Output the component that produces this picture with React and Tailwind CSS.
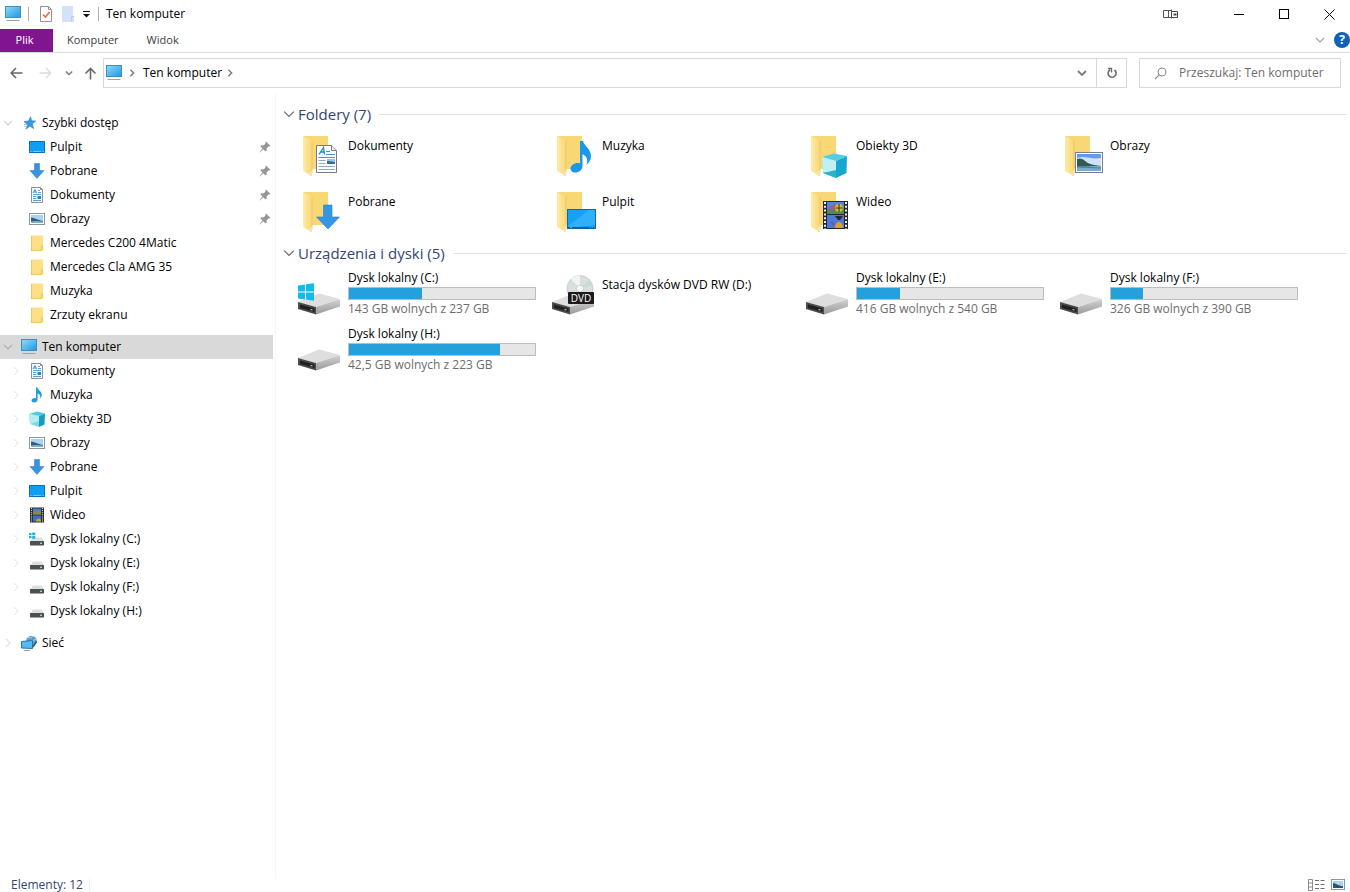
import { useState } from "react";
import clsx from "clsx";

function ComputerIcon() {
  return (
    <svg width="16" height="16" viewBox="0 0 16 16" className="shrink-0">
      <defs>
        <linearGradient id="screen" x1="0" y1="0" x2="1" y2="1">
          <stop offset="0" stopColor="#8fdcfb" />
          <stop offset="1" stopColor="#1f97e0" />
        </linearGradient>
      </defs>
      <rect x="0.5" y="0.5" width="15" height="11" fill="url(#screen)" stroke="#3f8fc0" />
      <path d="M1.500 14.500h13" stroke="#98a5ae" />
    </svg>
  );
}

function StarIcon() {
  return (
    <svg width="16" height="16" viewBox="0 0 16 16" className="shrink-0">
      <path
        d="M9.600 1.800l1 4 4.200.2-3.400 2.800 1.200 4.800-3.700-2.500L5.400 14l1.100-4.500L3 6.500l4.500-.5z"
        fill="#3a9ae0"
        stroke="#2a7fc0"
        strokeWidth="0.6"
      />
      <path d="M3 9.500h3M3.500 11.500h2M4 13.500h2" stroke="#7bb9e6" strokeWidth="0.8" />
    </svg>
  );
}

function DesktopIcon() {
  return (
    <svg width="16" height="16" viewBox="0 0 16 16" className="shrink-0">
      <rect x="0.5" y="2.5" width="15" height="11" fill="#109ef5" stroke="#0d6fb8" />
      <path d="M1 12.500h1.500M4 12.500h8M13.500 12.500h1.500" stroke="#8fd3ff" strokeWidth="0.8" />
    </svg>
  );
}

function DownloadIcon() {
  return (
    <svg width="16" height="16" viewBox="0 0 16 16" className="shrink-0">
      <path d="M5.500.5h5v7h4.500L8 15.500 1 7.500h4.500z" fill="#3a93e0" stroke="#2b77bd" strokeWidth="0.5" />
    </svg>
  );
}

function DocumentIcon() {
  return (
    <svg width="16" height="16" viewBox="0 0 16 16" className="shrink-0">
      <path d="M2.500.5h9l2 2v13h-11z" fill="#fff" stroke="#8b9096" />
      <path d="M11.500.5v2h2" fill="none" stroke="#8b9096" />
      <path d="M4 6l2-3.500L7.500 6M5 5h2" fill="none" stroke="#2b8fd6" />
      <path d="M9 3.500h2M9 5.500h3M4 7.500h8M4 9.500h3.500M4 11.500h3.500M4 13.500h8" stroke="#4ba3dc" />
      <rect x="8.500" y="9" width="3.500" height="3" fill="#2f7fb5" />
    </svg>
  );
}

function PictureIcon() {
  return (
    <svg width="16" height="16" viewBox="0 0 16 16" className="shrink-0">
      <rect x="0.5" y="2.5" width="15" height="11" fill="#fff" stroke="#8d949b" />
      <rect x="2" y="4" width="12" height="8" fill="#a9d3f2" />
      <path d="M2 6.500c3 .2 5 2 12 3.500v2H2z" fill="#335b73" />
      <path d="M2 10.500c4-.8 8-.6 12 0V12H2z" fill="#7fb3d6" />
    </svg>
  );
}

function FolderIcon() {
  return (
    <svg width="16" height="16" viewBox="0 0 16 16" className="shrink-0">
      <path d="M2 .5h12V15.500H2z" fill="#fddf85" />
      <path d="M2.500 1v14.500M2 15.500h10" stroke="#ecc75f" />
      <path d="M12 11l2-1v5.500h-2z" fill="#f0c95f" />
    </svg>
  );
}

function NoteIcon() {
  return (
    <svg width="16" height="16" viewBox="0 0 16 16" className="shrink-0">
      <path
        d="M7 .5h1.500c.3 2.700 4.500 4 4.300 7.300 0 1.700-.8 2.900-1.800 3.700.8-2.300.3-4-2.400-5.200v6.200C8.500 14.400 7 15.500 5.100 15.500 3.500 15.500 2.500 14.700 2.500 13.500c0-1.400 1.500-2.500 3.200-2.500.5 0 .9.1 1.300.2z"
        fill="#1b9be8"
      />
    </svg>
  );
}

function CubeIcon() {
  return (
    <svg width="16" height="16" viewBox="0 0 16 16" className="shrink-0">
      <path d="M0 3l8-2.500L16 2.500 10 5z" fill="#4fcbe0" />
      <path d="M0 3l10 2v11L1 13z" fill="#7fd9e4" />
      <path d="M0 3l10 2v5L1 13z" fill="#b4edf2" />
      <path d="M10 5l6-2.500-.5 11L10 16z" fill="#149dc4" />
    </svg>
  );
}

function FilmIcon() {
  return (
    <svg width="16" height="16" viewBox="0 0 16 16" className="shrink-0">
      <rect x="1" y="0.5" width="14" height="15" fill="#2b2b2e" />
      <path d="M2.500 1v14M13.500 1v14" stroke="#d8d8d8" strokeWidth="1.2" strokeDasharray="1 1.100" />
      <rect x="4" y="1.5" width="8" height="6" fill="#4b7fc9" />
      <rect x="4" y="8.5" width="8" height="6" fill="#3b6fc2" />
      <path d="M4 5c3 0 4-2 8-1v3.500H4z" fill="#8b8a4a" />
      <path d="M7 14.500c0-2 1.500-3 3-3s2 1.500 2 3z" fill="#c8a23c" />
    </svg>
  );
}

function DriveIcon({ system }) {
  return (
    <svg width="16" height="16" viewBox="0 0 16 16" className="shrink-0">
      <path d="M4 6.500h8.500L15 10.500H1z" fill="#dcdedf" />
      <rect x="1" y="10" width="14" height="4.5" rx="0.5" fill="#4d5052" />
      <rect x="11" y="11.5" width="2" height="1.5" fill="#79e58d" />
      {system && (
        <path d="M0 2h2.500v2.300H0zM3.200 1.600h3v2.700h-3zM0 5h2.500v2.300H0zM3.200 5h3v2.700h-3z" fill="#19b5dc" />
      )}
    </svg>
  );
}

function NetworkIcon() {
  return (
    <svg width="16" height="16" viewBox="0 0 16 16" className="shrink-0">
      <circle cx="10.5" cy="6" r="5.3" fill="#5b9fc4" />
      <path d="M7 2.500c2 1 4 0 5-1.500M11 6l4-2" stroke="#a6d7ee" fill="none" />
      <path d="M0.500 6.500l11-1v8l-11-.5z" fill="#58b9f2" stroke="#2277ae" />
      <path d="M12 12l3.500-5.500" stroke="#34566b" strokeWidth="1.4" />
      <path d="M3 15.500h6" stroke="#8fa6b3" />
    </svg>
  );
}

function PinIcon() {
  return (
    <svg width="12" height="12" viewBox="0 0 12 12" className="shrink-0">
      <path
        d="M7 .5L11.500 5l-1.300.6-.7-.2-2 2 .1 2.200-1 .9L4.300 8.200.8 11.500.4 11.200 3.500 7.400 1.300 5.200l1-1 2.300.2 2-2-.2-.8z"
        fill="#93969a"
      />
    </svg>
  );
}

function Chevron({ className, direction = "down", size = 10, width = 1.2 }) {
  const d = direction === "down" ? "M1 3l4 4 4-4" : "M3 1l4 4-4 4";
  return (
    <svg width={size} height={size} viewBox="0 0 10 10" className={clsx("shrink-0", className)}>
      <path d={d} fill="none" stroke="currentColor" strokeWidth={width} />
    </svg>
  );
}

/* Large icons, 48px box */

function FolderBack() {
  return (
    <>
      <defs>
        <linearGradient id="flap" x1="0" y1="0" x2="1" y2="0">
          <stop offset="0" stopColor="#ffeaa6" />
          <stop offset="1" stopColor="#f9d775" />
        </linearGradient>
      </defs>
      <path d="M8 4h25v33H16z" fill="#f8d775" />
      <path d="M8 4l9 5v35L8 39z" fill="url(#flap)" />
      <path d="M17 9v32l-1.500 3" fill="none" stroke="#e9c461" strokeWidth="0.8" />
      <path d="M13 41.500l4-3v6z" fill="#f5e3ae" />
    </>
  );
}

const OVERLAYS = {
  documents: (
    <>
      <path d="M21.500 13.500h15l5 5v22h-20z" fill="#fff" stroke="#787c82" />
      <path d="M36.500 13.500v5h5" fill="#eee" stroke="#787c82" />
      <path d="M24 22.500l4.500-7 1 7M25.500 20h3.500" fill="none" stroke="#1d86cf" strokeWidth="1.3" />
      <path d="M31 19.500h4M31 22.500h9M23.500 25.500h16.500" stroke="#4a92c9" />
      <path d="M23.500 28.500h7M23.500 31.500h7M23.500 34.500h16.500M23.500 37.500h16.500" stroke="#8fabc4" />
      <rect x="32" y="27" width="8" height="5" fill="#386d8e" />
      <path d="M32 27h8v3c-3 0-4-1-8-1z" fill="#91c5e6" />
    </>
  ),
  music: (
    <path
      d="M31 9h3c1 5 7.500 7 8 15 0 4-2 6.500-4.500 9 1.500-5 1-8-4-11v12c0 4-3.500 6.500-7.500 6.500-3 0-4.500-1.800-4.500-4 0-3 3.500-5.500 7-5.500.8 0 1.700.1 2.500.4z"
      fill="#1a98e8"
    />
  ),
  objects: (
    <>
      <path d="M19 25l12-3.500L44 24l-11 5z" fill="#55cde3" />
      <path d="M19 25l14 4v17l-13-5z" fill="#73d9e3" />
      <path d="M19 25l14 4v12l-13-1z" fill="#c1f0f3" />
      <path d="M33 29l11-5-.5 17L33 46z" fill="#18a8cf" />
      <path d="M20 41l13-3v8z" fill="#28b5c9" />
    </>
  ),
  pictures: (
    <>
      <rect x="18.5" y="20.5" width="27" height="20" fill="#fff" stroke="#777f8c" />
      <rect x="20" y="22" width="24" height="17" fill="#5f9cec" />
      <path d="M20 26c8-3 14 2 24 0v8H20z" fill="#cfe3f8" />
      <path d="M20 27c5-2 8 2 11 4 4 2 8 2 13 3v1H20z" fill="#36594e" />
      <path d="M20 34.500c8 .5 16-1 24-.5v5H20z" fill="#76aed3" />
      <path d="M20 35l24 1" stroke="#4d7f94" />
    </>
  ),
  downloads: (
    <path d="M28.500 17h8.500v12h7.500L33 41 21.500 29h7z" fill="#3696e6" stroke="#2c7dc4" strokeWidth="0.6" />
  ),
  desktop: (
    <>
      <rect x="18.500" y="21.5" width="28" height="19" fill="#14a1f7" stroke="#1269a3" />
      <path d="M19 40V38L40 22h6v15z" fill="#2fb0fb" />
      <path d="M19 39.500h2M23 39.500h17M41.500 39.500h1M44 39.500h1" stroke="#0b5b93" />
    </>
  ),
  video: (
    <>
      <rect x="20" y="13" width="25" height="28" fill="#26272b" />
      <path d="M22 14v27M43 14v27" stroke="#efefef" strokeWidth="2" strokeDasharray="2 1.800" />
      <rect x="24" y="14" width="17" height="12" fill="#5285e0" />
      <rect x="24" y="27" width="17" height="13" fill="#4a7add" />
      <path d="M24 22c5-3 10 0 17-2v6H24z" fill="#4f8a56" />
      <path d="M25 20l6-4 4 3-5 4z" fill="#9a5f8d" />
      <circle cx="36" cy="20" r="4" fill="#d9b92e" />
      <path d="M36 16v8M32.500 20h7" stroke="#493e22" strokeWidth="1.2" />
      <path d="M32 40c0-4 2-6 4-6s4 2 4 6z" fill="#e0a12b" />
      <path d="M32 28h8l-3 4h-2z" fill="#26272b" />
      <path d="M28 34l3 3" stroke="#8a4f79" strokeWidth="2" />
    </>
  ),
};

function LargeFolder({ kind }) {
  return (
    <svg width="48" height="48" viewBox="0 0 48 48" className="shrink-0">
      <FolderBack />
      {OVERLAYS[kind]}
    </svg>
  );
}

function LargeDrive({ variant }) {
  return (
    <svg width="48" height="48" viewBox="0 0 48 48" className="shrink-0">
      <defs>
        <linearGradient id="side" x1="0" y1="0" x2="0" y2="1">
          <stop offset="0" stopColor="#d2d2d2" />
          <stop offset="1" stopColor="#9a9a9a" />
        </linearGradient>
      </defs>
      {variant === "dvd" && (
        <>
          <circle cx="31" cy="17.5" r="13" fill="#d9dfdf" stroke="#b7bfbf" strokeWidth="0.6" />
          <path d="M31 17.500L22 8a13 13 0 0 1 9-3.500z" fill="#f0f5f3" />
          <path d="M31 17.500l12.500-3a13 13 0 0 0-3-6z" fill="#c9dcd3" />
          <circle cx="31" cy="17.5" r="3.5" fill="#f7f7f7" stroke="#b9bebe" strokeWidth="0.6" />
        </>
      )}
      <path d="M3 31l21-8.500L45 28 21 36z" fill="#dededf" />
      <path d="M21 36l24-8v7.500L21 43.500z" fill="url(#side)" />
      <path d="M3 31l18 5v7.500L3 38z" fill="#4a4b4c" />
      <path d="M5 33.500l14.500 4v3.500L5 37z" fill="#1f2021" />
      <path d="M15.500 38.500l2 .5" stroke="#b6e3c0" strokeWidth="1.2" />
      {variant === "system" && (
        <path
          d="M3 14.500l7-1v7H3zM11 13.300l8-1.100v8.300h-8zM3 21.500h7v7l-7-1zM11 21.500h8v8.200l-8-1.100z"
          fill="#12bce8"
        />
      )}
      {variant === "dvd" && (
        <>
          <rect x="19" y="21" width="26" height="12" rx="1" fill="#1b1b1c" />
          <text x="32" y="31" textAnchor="middle" fontSize="10" fill="#fff" fontFamily="Open Sans, sans-serif">
            DVD
          </text>
        </>
      )}
    </svg>
  );
}

const QUICK_ACCESS = [
  { label: "Pulpit", icon: DesktopIcon, pinned: true },
  { label: "Pobrane", icon: DownloadIcon, pinned: true },
  { label: "Dokumenty", icon: DocumentIcon, pinned: true },
  { label: "Obrazy", icon: PictureIcon, pinned: true },
  { label: "Mercedes C200 4Matic", icon: FolderIcon },
  { label: "Mercedes Cla AMG 35", icon: FolderIcon },
  { label: "Muzyka", icon: FolderIcon },
  { label: "Zrzuty ekranu", icon: FolderIcon },
];

const THIS_PC = [
  { label: "Dokumenty", icon: DocumentIcon },
  { label: "Muzyka", icon: NoteIcon },
  { label: "Obiekty 3D", icon: CubeIcon },
  { label: "Obrazy", icon: PictureIcon },
  { label: "Pobrane", icon: DownloadIcon },
  { label: "Pulpit", icon: DesktopIcon },
  { label: "Wideo", icon: FilmIcon },
  { label: "Dysk lokalny (C:)", icon: DriveIcon, system: true },
  { label: "Dysk lokalny (E:)", icon: DriveIcon },
  { label: "Dysk lokalny (F:)", icon: DriveIcon },
  { label: "Dysk lokalny (H:)", icon: DriveIcon },
];

const FOLDERS = [
  { label: "Dokumenty", kind: "documents" },
  { label: "Muzyka", kind: "music" },
  { label: "Obiekty 3D", kind: "objects" },
  { label: "Obrazy", kind: "pictures" },
  { label: "Pobrane", kind: "downloads" },
  { label: "Pulpit", kind: "desktop" },
  { label: "Wideo", kind: "video" },
];

const DRIVES = [
  { label: "Dysk lokalny (C:)", used: 39.5, info: "143 GB wolnych z 237 GB", variant: "system" },
  { label: "Stacja dysków DVD RW (D:)", variant: "dvd" },
  { label: "Dysk lokalny (E:)", used: 23, info: "416 GB wolnych z 540 GB" },
  { label: "Dysk lokalny (F:)", used: 17, info: "326 GB wolnych z 390 GB" },
  { label: "Dysk lokalny (H:)", used: 81, info: "42,5 GB wolnych z 223 GB" },
];

function TitleBar() {
  return (
    <header className="flex h-7 items-center pl-[5px] pr-[15px]">
      <ComputerIcon />
      <span className="ml-[7px] h-3.5 w-px bg-[#b0b0b0]" />
      <div className="ml-2.5 flex items-center gap-2">
        <button aria-label="Właściwości">
          <svg width="14" height="16" viewBox="0 0 14 16">
            <path d="M1.500.5h8l3 3v12h-11z" fill="#fff" stroke="#9a8f8f" />
            <path d="M9.500.5v3h3" fill="none" stroke="#9a8f8f" />
            <path d="M4 8.500l2.500 2.500L10.500 6" fill="none" stroke="#e0733a" strokeWidth="1.6" />
          </svg>
        </button>
        <button aria-label="Nowy folder">
          <svg width="14" height="16" viewBox="0 0 14 16">
            <path d="M1 0h11v10h1v6H1z" fill="#d3e2f8" />
            <path d="M10.500 15.500v-5h2.500" fill="none" stroke="#b9cdec" />
          </svg>
        </button>
        <button aria-label="Dostosuj pasek">
          <svg width="7" height="8" viewBox="0 0 7 8">
            <path d="M0 1.500h7" stroke="#111" />
            <path d="M0 4h7L3.500 7.500z" fill="#111" />
          </svg>
        </button>
      </div>
      <span className="ml-2 h-3.5 w-px bg-[#b0b0b0]" />
      <h1 className="ml-[7px] flex-1">Ten komputer</h1>
      <svg width="16" height="11" viewBox="0 0 16 11" className="mr-[55px]">
        <path d="M9 1.500H.5v7H9M5.500 2v6M8.500.5v9" fill="none" stroke="#555" />
        <path d="M8.500 2.500h6v6h-6z" fill="#fff" stroke="#444" />
        <path d="M10.500 5.500h3" stroke="#444" strokeWidth="2" />
      </svg>
      <div className="flex gap-[34px]">
        <button aria-label="Minimalizuj">
          <svg width="11" height="11" viewBox="0 0 11 11">
            <path d="M0 5.500h10" stroke="#000" />
          </svg>
        </button>
        <button aria-label="Maksymalizuj">
          <svg width="11" height="11" viewBox="0 0 11 11">
            <rect x="0.5" y="0.5" width="9" height="9" fill="none" stroke="#000" />
          </svg>
        </button>
        <button aria-label="Zamknij">
          <svg width="11" height="11" viewBox="0 0 11 11">
            <path d="M.5.5l10 10M10.500.5l-10 10" stroke="#000" />
          </svg>
        </button>
      </div>
    </header>
  );
}

function Ribbon() {
  return (
    <nav className="flex h-[25px] items-stretch border-b border-[#dcdcdc] text-[11px] text-[#3c3c3c]">
      <button className="mt-px w-[53px] bg-[#80168f] pr-1 text-white">Plik</button>
      <button className="ml-3.5 pt-px">Komputer</button>
      <button className="ml-7 pt-px">Widok</button>
      <div className="ml-auto flex items-center gap-[9px]">
        <button aria-label="Rozwiń wstążkę">
          <Chevron className="text-[#a5a5a5]" />
        </button>
        <button
          aria-label="Pomoc"
          className="size-4 rounded-full bg-[#0f62b4] text-xs leading-4 font-bold text-white"
        >
          ?
        </button>
      </div>
    </nav>
  );
}

function AddressBar() {
  const [query, setQuery] = useState("");

  return (
    <div className="flex h-10 items-center pl-2.5 pr-[9px]">
      <button aria-label="Wstecz">
        <svg width="13" height="12" viewBox="0 0 13 12">
          <path d="M12.500 6H1.500M6 1L1.200 6 6 11" fill="none" stroke="#6a6a6a" strokeWidth="1.6" />
        </svg>
      </button>
      <button aria-label="Dalej" className="ml-4">
        <svg width="13" height="12" viewBox="0 0 13 12">
          <path d="M.5 6h11M7 1l4.800 5L7 11" fill="none" stroke="#dcdcdc" strokeWidth="1.4" />
        </svg>
      </button>
      <button aria-label="Ostatnie lokalizacje" className="ml-[13px]">
        <Chevron size={8} width={1.8} className="text-[#7a7a7a]" />
      </button>
      <button aria-label="W górę" className="ml-[11px]">
        <svg width="13" height="13" viewBox="0 0 13 13">
          <path d="M6.500 12.500V1.500M1.500 6.500l5-5 5 5" fill="none" stroke="#6a6a6a" strokeWidth="1.6" />
        </svg>
      </button>
      <div className="ml-1.5 flex h-[30px] flex-1 items-center border border-[#d9d9d9]">
        <span className="ml-0.5">
          <ComputerIcon />
        </span>
        <Chevron direction="right" size={8} width={1.8} className="ml-1.5 text-[#7a7a7a]" />
        <a href="#computer" className="ml-[7px]">
          Ten komputer
        </a>
        <Chevron direction="right" size={8} width={1.8} className="ml-1 text-[#7a7a7a]" />
        <button aria-label="Poprzednie lokalizacje" className="ml-auto mr-[9px]">
          <Chevron width={1.8} className="text-[#7a7a7a]" />
        </button>
        <button
          aria-label="Odśwież"
          className="flex h-full w-[30px] items-center justify-center border-l border-[#d9d9d9]"
        >
          <svg width="12" height="12" viewBox="0 0 12 12">
            <path d="M8.500 3A4 4 0 1 1 4 2.800" fill="none" stroke="#6a6a6a" strokeWidth="1.6" />
            <path d="M2 1.500h3.500v4" fill="none" stroke="#6a6a6a" strokeWidth="1.4" />
          </svg>
        </button>
      </div>
      <label className="ml-3 flex h-[30px] w-[202px] items-center border border-[#d9d9d9] pl-3.5">
        <svg width="13" height="13" viewBox="0 0 13 13" className="shrink-0">
          <circle cx="8" cy="5" r="4" fill="none" stroke="#8a8a8a" />
          <path d="M5.200 7.800L.8 12.200" stroke="#8a8a8a" strokeWidth="1.2" />
        </svg>
        <input
          type="text"
          value={query}
          onChange={(e) => setQuery(e.target.value)}
          aria-label="Przeszukaj: Ten komputer"
          placeholder="Przeszukaj: Ten komputer"
          className="ml-3 min-w-0 flex-1 outline-none placeholder:text-[#6d6d6d]"
        />
      </label>
    </div>
  );
}

function TreeRoot({ label, icon: Icon, open, selected }) {
  return (
    <a
      href="#"
      className={clsx("mr-0.5 flex h-6 items-center pl-[3px]", selected && "bg-[#d9d9d9]")}
    >
      <Chevron
        direction={open ? "down" : "right"}
        className={selected ? "text-[#b0b0b0]" : open ? "text-[#d4d4d4]" : "text-[#e2e2e2]"}
      />
      <span className="ml-2">
        <Icon />
      </span>
      <span className="ml-[5px]">{label}</span>
    </a>
  );
}

function TreeItem({ label, icon: Icon, pinned, system, expandable }) {
  return (
    <a href="#" className="flex h-6 items-center pl-[11px] pr-1">
      <span className="w-[18px]">
        {expandable && <Chevron direction="right" width={1} className="text-[#e2e2e2]" />}
      </span>
      <Icon system={system} />
      <span className="ml-[5px] flex-1">{label}</span>
      {pinned && <PinIcon />}
    </a>
  );
}

function Sidebar() {
  return (
    <nav className="flex w-[276px] shrink-0 flex-col gap-2 border-r border-[#f7f7f7] pt-[18px]">
      <div>
        <TreeRoot label="Szybki dostęp" icon={StarIcon} open />
        {QUICK_ACCESS.map((item) => (
          <TreeItem key={item.label} {...item} />
        ))}
      </div>
      <div>
        <TreeRoot label="Ten komputer" icon={ComputerIcon} open selected />
        {THIS_PC.map((item) => (
          <TreeItem key={item.label} {...item} expandable />
        ))}
      </div>
      <TreeRoot label="Sieć" icon={NetworkIcon} />
    </nav>
  );
}

function Section({ title, children }) {
  return (
    <section>
      <h2 className="mb-[9px] flex items-center pl-[7px] text-[15px] leading-[18px] text-[#34466f]">
        <Chevron size={12} width={1} className="mr-[3px] text-[#6a6a6a]" />
        {title}
        <span className="ml-2 mr-[3px] h-px flex-1 bg-[#e2e2e2]" />
      </h2>
      <div className="grid grid-cols-[repeat(auto-fill,254px)] pl-[19px]">{children}</div>
    </section>
  );
}

function Drive({ label, used, info, variant }) {
  return (
    <a href="#" className="flex h-14 gap-[5px]">
      <LargeDrive variant={variant} />
      {info ? (
        <div className="w-[188px]">
          <div className="leading-[14px]">{label}</div>
          <div className="mt-0.5 h-[13px] border border-[#bcbcbc] bg-[#e6e6e6]">
            <div className="h-full bg-[#26a0da]" style={{ width: `${used}%` }} />
          </div>
          <div className="mt-px leading-4 text-[#6d6d6d]">{info}</div>
        </div>
      ) : (
        <div className="pt-1.5 leading-4">{label}</div>
      )}
    </a>
  );
}

export default function App() {
  return (
    <div className="flex h-screen flex-col overflow-hidden bg-white font-['Open_Sans',sans-serif] text-xs whitespace-nowrap text-black">
      <TitleBar />
      <Ribbon />
      <AddressBar />
      <div className="flex min-h-0 flex-1">
        <Sidebar />
        <main className="min-w-0 flex-1 pt-3">
          <Section title="Foldery (7)">
            {FOLDERS.map(({ label, kind }) => (
              <a key={kind} href="#" className="flex h-14 gap-[5px]">
                <LargeFolder kind={kind} />
                <span className="pt-1.5 leading-4">{label}</span>
              </a>
            ))}
          </Section>
          <Section title="Urządzenia i dyski (5)">
            {DRIVES.map((drive) => (
              <Drive key={drive.label} {...drive} />
            ))}
          </Section>
        </main>
      </div>
      <footer className="flex h-3.5 items-center pl-[11px] pr-[5px] text-[#34466f]">
        <span>Elementy: 12</span>
        <span className="ml-1.5 h-3 w-px bg-[#ececec]" />
        <div className="ml-auto flex items-center gap-[5px]">
          <button aria-label="Szczegóły">
            <svg width="18" height="14" viewBox="0 0 18 14">
              <path d="M.5 1.500h4v11h-4zM.5 5h4M.5 9h4" fill="none" stroke="#8d8d8d" />
              <path d="M7 2.500h4M12.500 2.500h4M7 6.500h4M12.500 6.500h4M7 10.500h4M12.500 10.500h4" stroke="#6d6d6d" />
            </svg>
          </button>
          <button aria-label="Duże ikony">
            <svg width="14" height="12" viewBox="0 0 14 12">
              <rect x="0.5" y="0.5" width="13" height="10" fill="#fff" stroke="#5aa5cf" />
              <rect x="2" y="2" width="10" height="7" fill="#a9d3f2" />
              <path d="M2 4c4 .5 5 3 10 3v2H2z" fill="#2d5168" />
            </svg>
          </button>
        </div>
      </footer>
    </div>
  );
}
